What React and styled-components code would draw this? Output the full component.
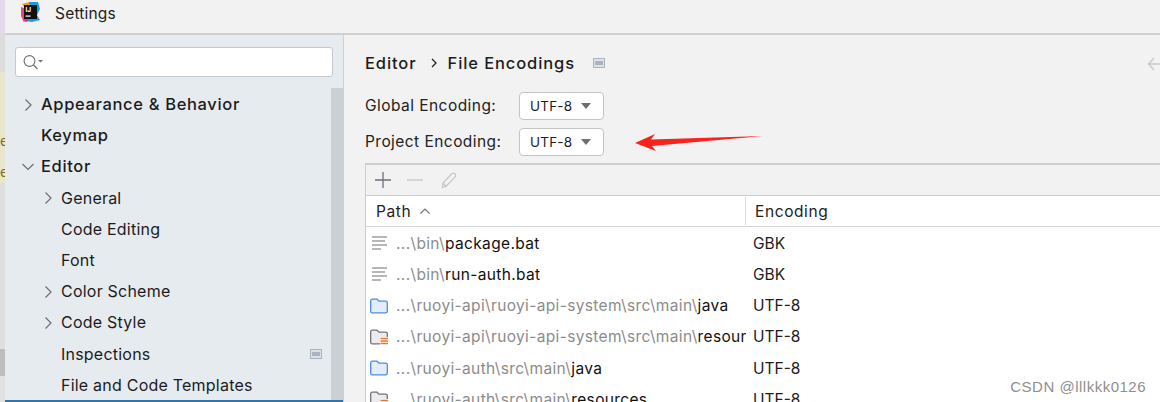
import React from 'react';
import styled, { createGlobalStyle } from 'styled-components';

const GlobalStyle = createGlobalStyle`
    html, body {
        margin: 0;
        padding: 0;
        background: #f2f2f2;
    }
    body {
        font-family: Inter, "Noto Sans", sans-serif;
        color: #1a1a1a;
    }
`;

const Page = styled.div`
    width: 1160px;
    height: 402px;
    display: flex;
    overflow: hidden;
    position: relative;
`;

/* the other window peeking out on the left */
const BackStrip = styled.div`
    width: 5px;
    flex: none;
    display: flex;
    flex-direction: column;
    overflow: hidden;
`;

const BackPiece = styled.div`
    height: ${p => p.$h}px;
    flex: none;
    background: ${p => p.$bg};
    font-size: 14px;
    line-height: 31px;
    color: #7a6a20;
    text-align: right;
    padding-top: ${p => p.$top || 0}px;
    box-sizing: border-box;
`;

const Window = styled.div`
    flex: 1;
    min-width: 0;
    display: flex;
    flex-direction: column;
`;

const TitleBar = styled.div`
    height: 33px;
    flex: none;
    display: flex;
    align-items: center;
    padding-left: 15px;
    gap: 14px;
    background: #f2f2f2;
    border-bottom: 2px solid #d0d0d0;
`;

const TitleText = styled.span`
    font-size: 15.5px;
    letter-spacing: 0.2px;
    margin-top: -7px;
    color: #222;
`;

const LogoWrap = styled.svg`
    width: 21px;
    height: 22px;
    margin-top: -9px;
    flex: none;
`;

const Body = styled.div`
    flex: 1;
    min-height: 0;
    display: flex;
`;

const Sidebar = styled.div`
    width: 338px;
    flex: none;
    background: #e6ebf0;
    border-right: 1px solid #d0d0d0;
    display: flex;
    flex-direction: column;
    overflow: hidden;
`;

const SearchBox = styled.div`
    margin: 12px 10px 0 10px;
    height: 30px;
    flex: none;
    box-sizing: border-box;
    background: #fff;
    border: 1px solid #c4c9cf;
    border-radius: 3px;
    display: flex;
    align-items: center;
    padding-left: 7px;
`;

const TreeArea = styled.div`
    flex: 1;
    min-height: 0;
    display: flex;
    margin-top: 11px;
`;

const Tree = styled.div`
    flex: 1;
    min-width: 0;
    display: flex;
    flex-direction: column;
    padding-top: 0.5px;
`;

const Scrollbar = styled.div`
    width: 12px;
    flex: none;
    background: #cbd0d5;
`;

const BottomLine = styled.div`
    height: 2px;
    flex: none;
    background: #3574a8;
`;

const TreeRow = styled.div`
    height: 31.2px;
    flex: none;
    display: flex;
    align-items: center;
    padding-left: ${p => p.$depth === 1 ? 56 : 36}px;
    padding-right: 9px;
    font-size: ${p => p.$depth === 1 ? 16 : 16.5}px;
    font-weight: ${p => p.$depth === 1 ? 400 : 500};
    letter-spacing: ${p => p.$depth === 1 ? 0.22 : 0.65}px;
    color: #1c1c1c;
    position: relative;
    white-space: nowrap;
`;

const Chevron = styled.svg`
    position: absolute;
    left: ${p => p.$depth === 1 ? 37 : 17}px;
    top: 10px;
    width: 12px;
    height: 12px;
`;

const RowLabel = styled.span`
    flex: 1;
`;

const Main = styled.div`
    flex: 1;
    min-width: 0;
    background: #f2f2f2;
    padding: 16px 0 0 21px;
    display: flex;
    flex-direction: column;
    position: relative;
    overflow: hidden;
`;

const Crumbs = styled.div`
    height: 24px;
    flex: none;
    display: flex;
    align-items: center;
    font-size: 16.5px;
    font-weight: 500;
    letter-spacing: 0.9px;
    color: #1c1c1c;
`;

const CrumbSep = styled.svg`
    width: 12px;
    height: 12px;
    margin: 0 8px 0 11px;
`;

const CrumbBadge = styled.svg`
    width: 12px;
    height: 10px;
    margin-left: 18px;
`;

const BackArrow = styled.svg`
    position: absolute;
    right: 0;
    top: 21px;
    width: 13px;
    height: 16px;
`;

const FormRow = styled.div`
    height: 28px;
    flex: none;
    margin-top: ${p => p.$mt}px;
    display: flex;
    align-items: center;
`;

const FormLabel = styled.label`
    width: 154px;
    flex: none;
    font-size: 15.5px;
    letter-spacing: 0.45px;
    color: #222;
    margin-top: -1px;
`;

const Combo = styled.div`
    width: 85px;
    height: 28px;
    box-sizing: border-box;
    background: #fff;
    border: 1px solid #c4c4c4;
    border-radius: 4px;
    display: flex;
    align-items: center;
    padding-left: 10px;
    font-size: 13.5px;
    letter-spacing: 0.2px;
    color: #1c1c1c;
    justify-content: space-between;
    padding-right: 12px;
`;

const Caret = styled.span`
    width: 0;
    height: 0;
    border-left: 5.5px solid transparent;
    border-right: 5.5px solid transparent;
    border-top: 6px solid #6e6e6e;
`;

const TableWrap = styled.div`
    margin-top: 7px;
    flex: 1;
    min-height: 0;
    border-top: 2px solid #cdcdcd;
    border-left: 1px solid #cdcdcd;
    display: flex;
    flex-direction: column;
`;

const ToolBar = styled.div`
    height: 30px;
    flex: none;
    display: flex;
    align-items: center;
    padding-left: 8px;
    gap: 14px;
    border-bottom: 1px solid #cdcdcd;
`;

const ToolIcon = styled.svg`
    width: 18px;
    height: 18px;
    flex: none;
`;

const HeaderRow = styled.div`
    height: 30px;
    flex: none;
    display: flex;
    background: #fff;
    border-bottom: 1px solid #d4d4d4;
    font-size: 15.5px;
    letter-spacing: 0.6px;
    color: #222;
`;

const PathHead = styled.div`
    width: 380px;
    flex: none;
    box-sizing: border-box;
    display: flex;
    align-items: center;
    padding-left: 10px;
    gap: 8px;
    border-right: 1px solid #d9d9d9;
    margin: 1px 0;
`;

const EncHead = styled.div`
    flex: 1;
    display: flex;
    align-items: center;
    padding-left: 9px;
`;

const Rows = styled.div`
    flex: 1;
    min-height: 0;
    background: #fff;
    overflow: hidden;
    padding-top: 0.7px;
`;

const Row = styled.div`
    height: 31.2px;
    display: flex;
    align-items: center;
    font-size: 15.5px;
    white-space: nowrap;
`;

const PathCell = styled.div`
    width: 380px;
    flex: none;
    box-sizing: border-box;
    display: flex;
    align-items: center;
    padding-left: 4px;
    gap: 8px;
    overflow: hidden;

    svg {
        flex: none;
    }
`;

const PathText = styled.span`
    overflow: hidden;
    min-width: 0;
    color: #8c8c8c;
    letter-spacing: 0.35px;
`;

const FileName = styled.span`
    color: #111;
    letter-spacing: 0.35px;
`;

const EncCell = styled.div`
    padding-left: 7px;
    color: #1c1c1c;
    font-size: 15.5px;
`;

const RedArrow = styled.svg`
    position: absolute;
    left: 290px;
    top: 98px;
    width: 130px;
    height: 20px;
`;

const Watermark = styled.div`
    position: absolute;
    right: 14px;
    bottom: 7px;
    font-family: "Liberation Sans", Arial, sans-serif;
    font-size: 15px;
    letter-spacing: 0.5px;
    color: #8f8f8f;
`;

const Logo = () => (
    <LogoWrap viewBox="0 0 21 22">
        <path d="M2 3 L9 1 L13 4 L6 9 Z" fill="#fd9a1f" />
        <path d="M1 6 L7 8 L6 17 L4 21 L1 15 Z" fill="#f53e86" />
        <path d="M9 1 L18 1 L20 8 L17 14 L20 19 L12 21 L6 20 L10 10 Z" fill="#1a9bea" />
        <path d="M4 16 L9 18 L7 21 L3 20 Z" fill="#f7287b" />
        <rect x="4" y="4" width="13" height="14" fill="#111" />
        <text x="5.5" y="11" fontSize="6.5" fontWeight="700" fill="#fff" fontFamily="Inter, sans-serif">IJ</text>
        <rect x="5.5" y="14.5" width="5" height="1.2" fill="#fff" />
    </LogoWrap>
);

const SearchIcon = () => (
    <svg width="22" height="16" viewBox="0 0 22 16" fill="none">
        <circle cx="6.5" cy="7" r="5.4" stroke="#707070" strokeWidth="1.1" />
        <path d="M10.5 11 L14.5 15" stroke="#707070" strokeWidth="1.2" />
        <path d="M15 6 H20 L17.5 8.6 Z" fill="#707070" />
    </svg>
);

const ChevronRight = ({ depth }) => (
    <Chevron $depth={depth} viewBox="0 0 12 12" fill="none">
        <path d="M3.5 0.5 L9 6 L3.5 11.5" stroke="#6f6f6f" strokeWidth="1.2" />
    </Chevron>
);

const ChevronDown = ({ depth }) => (
    <Chevron $depth={depth} viewBox="0 0 12 12" fill="none">
        <path d="M0.5 3 L6 8.5 L11.5 3" stroke="#6f6f6f" strokeWidth="1.2" />
    </Chevron>
);

const SchemeBadge = () => (
    <svg width="12" height="10" viewBox="0 0 12 10">
        <rect x="0.5" y="0.5" width="11" height="9" fill="#dbe1e7" stroke="#a9b4bf" />
        <rect x="2" y="3" width="8" height="4" fill="#a9b4bf" />
    </svg>
);

const FileIcon = () => (
    <svg width="18" height="14" viewBox="0 0 18 14" fill="none" stroke="#7d7d7d" strokeWidth="1.1">
        <path d="M2 1 H17" />
        <path d="M2 5 H15" />
        <path d="M2 9 H17" />
        <path d="M2 13 H11" />
    </svg>
);

const FolderIcon = () => (
    <svg width="18" height="16" viewBox="0 0 18 16" fill="none">
        <path d="M0.7 2.8 Q0.7 1.2 2.3 1.2 H7 L9 3.2 H15.7 Q17.3 3.2 17.3 4.8 V13.2 Q17.3 14.8 15.7 14.8 H2.3 Q0.7 14.8 0.7 13.2 Z" fill="#e4edfb" stroke="#4d8ae6" strokeWidth="1.3" />
    </svg>
);

const ResourceIcon = () => (
    <svg width="18" height="16" viewBox="0 0 18 16" fill="none">
        <path d="M0.7 2.8 Q0.7 1.2 2.3 1.2 H7 L9 3.2 H15.7 Q17.3 3.2 17.3 4.8 V13.2 Q17.3 14.8 15.7 14.8 H2.3 Q0.7 14.8 0.7 13.2 Z" fill="#ececf0" stroke="#6f737a" strokeWidth="1.3" />
        <rect x="10" y="8" width="8" height="8" fill="#fff" />
        <path d="M10.5 9.5 H18 M10.5 12 H18 M10.5 14.5 H18" stroke="#e8762c" strokeWidth="1.3" />
    </svg>
);

const treeItems = [
    { label: 'Appearance & Behavior', depth: 0, arrow: 'right' },
    { label: 'Keymap', depth: 0 },
    { label: 'Editor', depth: 0, arrow: 'down' },
    { label: 'General', depth: 1, arrow: 'right' },
    { label: 'Code Editing', depth: 1 },
    { label: 'Font', depth: 1 },
    { label: 'Color Scheme', depth: 1, arrow: 'right' },
    { label: 'Code Style', depth: 1, arrow: 'right' },
    { label: 'Inspections', depth: 1, badge: true },
    { label: 'File and Code Templates', depth: 1 },
];

const encodings = [
    { icon: 'file', dir: '...\\bin\\', name: 'package.bat', enc: 'GBK' },
    { icon: 'file', dir: '...\\bin\\', name: 'run-auth.bat', enc: 'GBK' },
    { icon: 'folder', dir: '...\\ruoyi-api\\ruoyi-api-system\\src\\main\\', name: 'java', enc: 'UTF-8' },
    { icon: 'res', dir: '...\\ruoyi-api\\ruoyi-api-system\\src\\main\\', name: 'resources', enc: 'UTF-8' },
    { icon: 'folder', dir: '...\\ruoyi-auth\\src\\main\\', name: 'java', enc: 'UTF-8' },
    { icon: 'res', dir: '...\\ruoyi-auth\\src\\main\\', name: 'resources', enc: 'UTF-8' },
];

const rowIcons = { file: FileIcon, folder: FolderIcon, res: ResourceIcon };

export default function App() {
    return (
        <>
            <GlobalStyle />
            <Page>
                <BackStrip>
                    <BackPiece $h={33} $bg="#e3d9e8" />
                    <BackPiece $h={39} $bg="#dcdcdc" />
                    <BackPiece $h={111} $bg="#e8e6cd" $top={53}>e<br />e</BackPiece>
                    <BackPiece $h={166} $bg="#dedede" />
                    <BackPiece $h={27} $bg="#bdbdbd" />
                    <BackPiece $h={26} $bg="#e2e2e2" />
                </BackStrip>
                <Window>
                    <TitleBar>
                        <Logo />
                        <TitleText>Settings</TitleText>
                    </TitleBar>
                    <Body>
                        <Sidebar>
                            <SearchBox>
                                <SearchIcon />
                            </SearchBox>
                            <TreeArea>
                                <Tree>
                                    {treeItems.map(item => (
                                        <TreeRow key={item.label} $depth={item.depth}>
                                            {item.arrow === 'right' && <ChevronRight depth={item.depth} />}
                                            {item.arrow === 'down' && <ChevronDown depth={item.depth} />}
                                            <RowLabel>{item.label}</RowLabel>
                                            {item.badge && <SchemeBadge />}
                                        </TreeRow>
                                    ))}
                                </Tree>
                                <Scrollbar />
                            </TreeArea>
                            <BottomLine />
                        </Sidebar>
                        <Main>
                            <Crumbs>
                                Editor
                                <CrumbSep viewBox="0 0 12 12" fill="none">
                                    <path d="M4 2 L8 6 L4 10" stroke="#222" strokeWidth="1.3" />
                                </CrumbSep>
                                File Encodings
                                <CrumbBadge viewBox="0 0 12 10">
                                    <rect x="0.5" y="0.5" width="11" height="9" fill="#dfe3e7" stroke="#a9b4bf" />
                                    <rect x="2" y="3" width="8" height="4" fill="#a9b4bf" />
                                </CrumbBadge>
                            </Crumbs>
                            <BackArrow viewBox="0 0 13 16" fill="none">
                                <path d="M7 2 L1.5 8 L7 14 M1.5 8 H13" stroke="#c9c9c9" strokeWidth="1.4" />
                            </BackArrow>
                            <FormRow $mt={17}>
                                <FormLabel>Global Encoding:</FormLabel>
                                <Combo>UTF-8<Caret /></Combo>
                            </FormRow>
                            <FormRow $mt={8}>
                                <FormLabel>Project Encoding:</FormLabel>
                                <Combo>UTF-8<Caret /></Combo>
                            </FormRow>
                            <RedArrow viewBox="0 0 130 20">
                                <path d="M1 10 L21 1 L17 6.5 L129 3 L18 13 L22 18 Z" fill="#f8231c" />
                            </RedArrow>
                            <TableWrap>
                                <ToolBar>
                                    <ToolIcon viewBox="0 0 18 18" fill="none">
                                        <path d="M9 1 V17 M1 9 H17" stroke="#6c7079" strokeWidth="1.3" />
                                    </ToolIcon>
                                    <ToolIcon viewBox="0 0 18 18" fill="none">
                                        <path d="M1 9 H17" stroke="#c4c6c9" strokeWidth="1.3" />
                                    </ToolIcon>
                                    <ToolIcon viewBox="-2 0 18 18" fill="none">
                                        <path d="M3 12 L12 2.5 Q13.5 1.5 15 2.8 Q16.5 4.2 15.3 5.6 L6 15.5 L2.5 16.5 Z M3 12 L6 15.5" stroke="#c4c6c9" strokeWidth="1.2" />
                                    </ToolIcon>
                                </ToolBar>
                                <HeaderRow>
                                    <PathHead>
                                        Path
                                        <svg width="12" height="8" viewBox="0 0 12 8" fill="none">
                                            <path d="M1.5 6.5 L6 2 L10.5 6.5" stroke="#777" strokeWidth="1.2" />
                                        </svg>
                                    </PathHead>
                                    <EncHead>Encoding</EncHead>
                                </HeaderRow>
                                <Rows>
                                    {encodings.map(row => {
                                        const Icon = rowIcons[row.icon];
                                        return (
                                            <Row key={row.dir + row.name}>
                                                <PathCell>
                                                    <Icon />
                                                    <PathText>{row.dir}<FileName>{row.name}</FileName></PathText>
                                                </PathCell>
                                                <EncCell>{row.enc}</EncCell>
                                            </Row>
                                        );
                                    })}
                                </Rows>
                            </TableWrap>
                        </Main>
                    </Body>
                </Window>
                <Watermark>CSDN @lllkkk0126</Watermark>
            </Page>
        </>
    );
}
